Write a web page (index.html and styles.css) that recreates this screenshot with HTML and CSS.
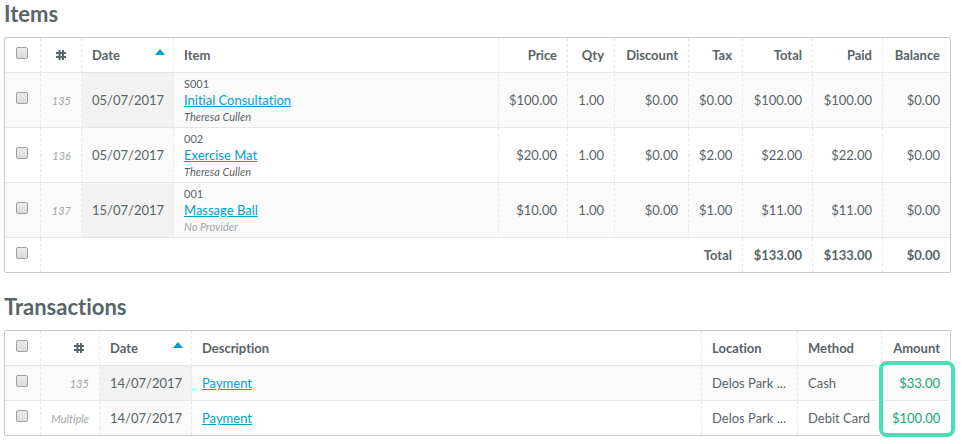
FILE: index.html
```html
<!DOCTYPE html>
<html lang="en">
<head>
  <meta charset="UTF-8">
  <title>Items and Transactions</title>
  <link rel="stylesheet" href="styles.css">
</head>
<body>
  <section class="section">
    <h2>Items</h2>
    <div class="panel">
      <table class="items">
        <colgroup>
          <col class="col-check"><col class="col-id"><col class="col-date"><col>
          <col class="col-price"><col class="col-qty"><col class="col-discount"><col class="col-tax">
          <col class="col-total"><col class="col-total"><col class="col-balance">
        </colgroup>
        <thead>
          <tr>
            <th class="check"><input type="checkbox" aria-label="Select all items"></th>
            <th class="hash" aria-label="Number">
              <svg width="10" height="10" viewBox="0 0 10 10"><path d="M3.5 0v10M7 0v10M0 3h10M0 7h10"/></svg>
            </th>
            <th class="sorted"><span>Date</span></th>
            <th>Item</th>
            <th class="num">Price</th>
            <th class="num">Qty</th>
            <th class="num">Discount</th>
            <th class="num">Tax</th>
            <th class="num">Total</th>
            <th class="num">Paid</th>
            <th class="num">Balance</th>
          </tr>
        </thead>
        <tbody>
          <tr>
            <td class="check"><input type="checkbox" aria-label="Select item 135"></td>
            <td class="id">135</td>
            <td class="date">05/07/2017</td>
            <td class="item">
              <div class="code">S001</div>
              <a href="#">Initial Consultation</a>
              <div class="provider">Theresa Cullen</div>
            </td>
            <td class="num">$100.00</td>
            <td class="num">1.00</td>
            <td class="num">$0.00</td>
            <td class="num">$0.00</td>
            <td class="num">$100.00</td>
            <td class="num">$100.00</td>
            <td class="num">$0.00</td>
          </tr>
          <tr>
            <td class="check"><input type="checkbox" aria-label="Select item 136"></td>
            <td class="id">136</td>
            <td class="date">05/07/2017</td>
            <td class="item">
              <div class="code">002</div>
              <a href="#">Exercise Mat</a>
              <div class="provider">Theresa Cullen</div>
            </td>
            <td class="num">$20.00</td>
            <td class="num">1.00</td>
            <td class="num">$0.00</td>
            <td class="num">$2.00</td>
            <td class="num">$22.00</td>
            <td class="num">$22.00</td>
            <td class="num">$0.00</td>
          </tr>
          <tr>
            <td class="check"><input type="checkbox" aria-label="Select item 137"></td>
            <td class="id">137</td>
            <td class="date">15/07/2017</td>
            <td class="item">
              <div class="code">001</div>
              <a href="#">Massage Ball</a>
              <div class="provider none">No Provider</div>
            </td>
            <td class="num">$10.00</td>
            <td class="num">1.00</td>
            <td class="num">$0.00</td>
            <td class="num">$1.00</td>
            <td class="num">$11.00</td>
            <td class="num">$11.00</td>
            <td class="num">$0.00</td>
          </tr>
        </tbody>
        <tfoot>
          <tr>
            <td class="check"><input type="checkbox" aria-label="Select totals"></td>
            <td class="num" colspan="7">Total</td>
            <td class="num">$133.00</td>
            <td class="num">$133.00</td>
            <td class="num">$0.00</td>
          </tr>
        </tfoot>
      </table>
    </div>
  </section>

  <section class="section">
    <h2>Transactions</h2>
    <div class="panel">
      <table class="transactions">
        <colgroup>
          <col class="col-check"><col class="col-ref"><col class="col-date"><col>
          <col class="col-location"><col class="col-method"><col class="col-amount">
        </colgroup>
        <thead>
          <tr>
            <th class="check"><input type="checkbox" aria-label="Select all transactions"></th>
            <th class="hash" aria-label="Number">
              <svg width="10" height="10" viewBox="0 0 10 10"><path d="M3.5 0v10M7 0v10M0 3h10M0 7h10"/></svg>
            </th>
            <th class="sorted"><span>Date</span></th>
            <th>Description</th>
            <th>Location</th>
            <th>Method</th>
            <th class="num">Amount</th>
          </tr>
        </thead>
        <tbody>
          <tr>
            <td class="check"><input type="checkbox" aria-label="Select transaction 135"></td>
            <td class="id">135</td>
            <td class="date">14/07/2017</td>
            <td><a href="#">Payment</a></td>
            <td>Delos Park ...</td>
            <td>Cash</td>
            <td class="num amount">$33.00</td>
          </tr>
          <tr>
            <td class="check"><input type="checkbox" aria-label="Select multiple transaction"></td>
            <td class="id">Multiple</td>
            <td class="date">14/07/2017</td>
            <td><a href="#">Payment</a></td>
            <td>Delos Park ...</td>
            <td>Debit Card</td>
            <td class="num amount">$100.00</td>
          </tr>
        </tbody>
      </table>
      <div class="highlight"></div>
    </div>
  </section>
</body>
</html>
```

FILE: styles.css
```css
body {
  margin: 0;
  padding: 0 11px 0 4px;
  background: #fff;
  color: #596468;
  font-family: Lato, sans-serif;
  font-size: 13px;
  line-height: 18px;
  font-variant-ligatures: none;
}

.section {
  margin-bottom: 20px;
}

h2 {
  margin: 0;
  padding-bottom: 10px;
  font-size: 22px;
  line-height: 27px;
  font-weight: bold;
}

.panel {
  position: relative;
  border: 1px solid #c8c8c8;
  border-radius: 2px;
}

table {
  width: 100%;
  table-layout: fixed;
  border-collapse: separate;
  border-spacing: 0;
}

.col-check { width: 36px; }
.col-id { width: 41px; }
.col-ref { width: 59px; }
.col-date { width: 92px; }
.col-price { width: 69px; }
.col-qty { width: 47px; }
.col-discount { width: 74px; }
.col-tax { width: 54px; }
.col-total { width: 70px; }
.col-balance { width: 67px; }
.col-location { width: 96px; }
.col-method { width: 84px; }
.col-amount { width: 68px; }

th, td {
  box-sizing: border-box;
  height: 35px;
  padding: 0 10px;
  border-right: 1px dashed #e8e8e8;
  border-bottom: 1px solid #e6e6e6;
  text-align: left;
  white-space: nowrap;
}

th:last-child, td:last-child {
  border-right: 0;
}

tbody tr:nth-child(odd) {
  background: #fafafa;
}

.items tbody td {
  height: 55px;
}

tfoot td,
.transactions tbody tr:last-child td {
  height: 34px;
  border-bottom: 0;
}

tfoot td {
  font-weight: bold;
}

.num {
  text-align: right;
}

.hash {
  padding-right: 15px;
}

.hash svg {
  display: block;
  margin-left: auto;
  fill: none;
  stroke: #596468;
  stroke-width: 2;
}

.check input {
  appearance: none;
  display: block;
  box-sizing: border-box;
  width: 12px;
  height: 12px;
  margin: 0 0 4px 1px;
  border: 1px solid #a0a0a0;
  border-radius: 2px;
  background: linear-gradient(#ebebeb, #dcdcdc);
}

/* sort arrow */
.sorted::after {
  content: "";
  float: right;
  margin: 3px -2px 0 0;
  border: 5px solid transparent;
  border-top: 0;
  border-bottom: 6px solid #009fce;
}

td.id {
  padding-top: 2px;
  color: #a0a5a7;
  font-size: 11px;
  font-style: italic;
  text-align: right;
}

.date {
  background: #fafafa;
}

tbody tr:nth-child(odd) .date {
  background: #f2f2f2;
}

a {
  color: #009fce;
}

.item {
  line-height: 16px;
}

.code,
.provider {
  font-size: 11px;
}

.provider {
  padding-top: 1px;
  font-style: italic;
}

.provider.none {
  color: #a0a5a7;
}

.amount {
  color: #10a674;
}

/* outline round the amounts */
.highlight {
  position: absolute;
  top: 30px;
  right: -5px;
  bottom: -2px;
  width: 68px;
  border: 4px solid #45e0b5;
  border-radius: 8px;
  box-shadow: 0 0 0 2px #fff, inset 0 0 0 2px #fff;
  pointer-events: none;
}
```
